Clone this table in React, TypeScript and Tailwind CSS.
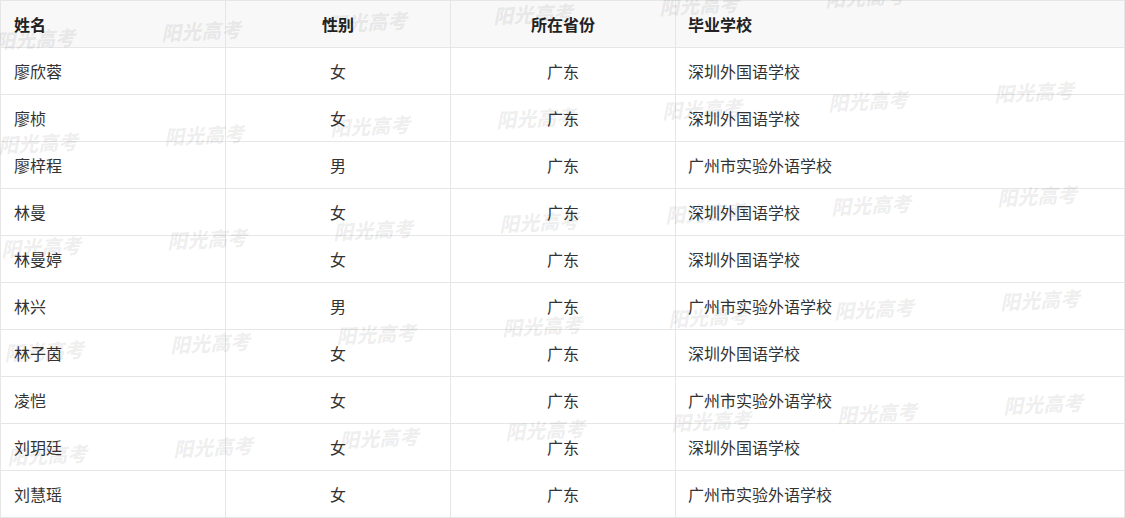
import React from 'react';

interface Student {
  name: string;
  gender: string;
  province: string;
  school: string;
}

const SZ = '深圳外国语学校';
const GZ = '广州市实验外语学校';

const STUDENTS: Student[] = [
  { name: '廖欣蓉', gender: '女', province: '广东', school: SZ },
  { name: '廖桢', gender: '女', province: '广东', school: SZ },
  { name: '廖梓程', gender: '男', province: '广东', school: GZ },
  { name: '林曼', gender: '女', province: '广东', school: SZ },
  { name: '林曼婷', gender: '女', province: '广东', school: SZ },
  { name: '林兴', gender: '男', province: '广东', school: GZ },
  { name: '林子茵', gender: '女', province: '广东', school: SZ },
  { name: '凌恺', gender: '女', province: '广东', school: GZ },
  { name: '刘玥廷', gender: '女', province: '广东', school: SZ },
  { name: '刘慧瑶', gender: '女', province: '广东', school: GZ },
];

// watermark tiles: 5 rows x 7 columns, drifting up to the right
const MARKS = Array.from({ length: 5 }).flatMap((_, r) =>
  Array.from({ length: 7 }).map((__, c) => ({
    key: `${r}-${c}`,
    x: 35 + 3 * r + 166 * c,
    y: 39 + 104 * r - 8.5 * c,
  }))
);

const Row: React.FC<{ cells: string[]; head?: boolean }> = ({ cells, head }) => {
  const base = head ? 'font-bold text-[#222]' : 'text-[#333]';
  return (
    <div className={`flex h-[47px] border-b border-[#e6e6e6] ${head ? 'bg-[#f8f8f8]' : 'bg-white'}`}>
      <div className={`w-[225px] shrink-0 border-r border-[#e6e6e6] flex items-center pl-[13px] ${base}`}>{cells[0]}</div>
      <div className={`w-[225px] shrink-0 border-r border-[#e6e6e6] flex items-center justify-center ${base}`}>{cells[1]}</div>
      <div className={`w-[225px] shrink-0 border-r border-[#e6e6e6] flex items-center justify-center ${base}`}>{cells[2]}</div>
      <div className={`w-[449px] shrink-0 border-r border-[#e6e6e6] flex items-center pl-[12px] ${base}`}>{cells[3]}</div>
    </div>
  );
};

export default function App() {
  return (
    <div
      className="relative w-[1125px] h-[518px] overflow-hidden bg-white text-[16px] leading-none"
      style={{ fontFamily: '"Noto Sans CJK SC", "Noto Sans", sans-serif' }}
    >
      <div className="border-t border-l border-[#e6e6e6]">
        <Row head cells={['姓名', '性别', '所在省份', '毕业学校']} />
        {STUDENTS.map(s => (
          <Row key={s.name} cells={[s.name, s.gender, s.province, s.school]} />
        ))}
      </div>

      {/* 阳光高考 watermark */}
      <div className="pointer-events-none absolute inset-0">
        {MARKS.map(m => (
          <span
            key={m.key}
            className="absolute -translate-x-1/2 -translate-y-1/2 -rotate-3 whitespace-nowrap text-[20px] font-black italic text-black/[0.07]"
            style={{ left: m.x, top: m.y, fontFamily: '"Noto Sans CJK SC", serif' }}
          >
            阳光高考
          </span>
        ))}
      </div>
    </div>
  );
}
